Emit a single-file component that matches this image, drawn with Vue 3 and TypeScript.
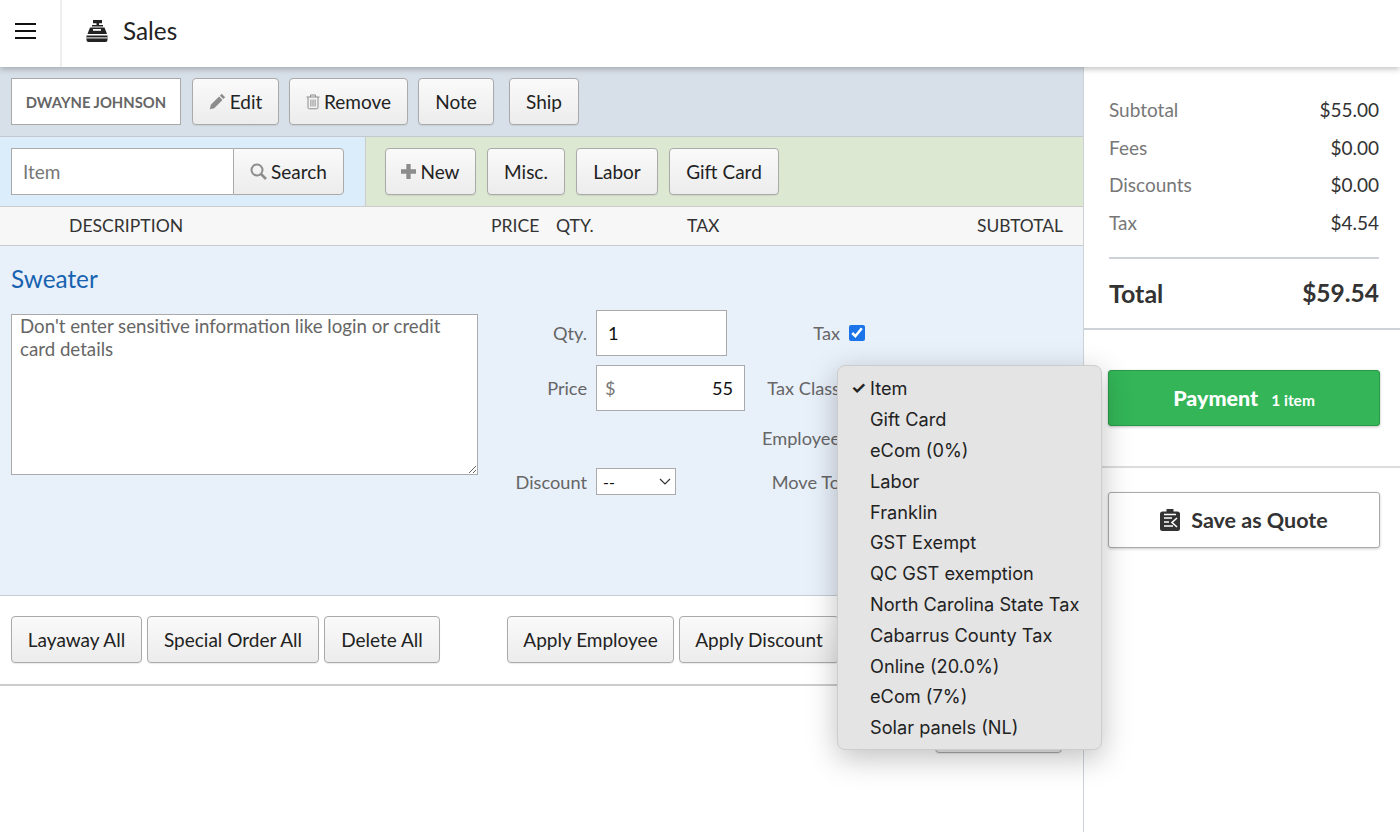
<script setup lang="ts">
const totals = [
  { label: 'Subtotal', value: '$55.00' },
  { label: 'Fees', value: '$0.00' },
  { label: 'Discounts', value: '$0.00' },
  { label: 'Tax', value: '$4.54' },
]
const taxClasses = ['Item', 'Gift Card', 'eCom (0%)', 'Labor', 'Franklin', 'GST Exempt', 'QC GST exemption', 'North Carolina State Tax', 'Cabarrus County Tax', 'Online (20.0%)', 'eCom (7%)', 'Solar panels (NL)']
</script>

<template>
  <div class="page">
    <header class="topbar">
      <div class="burger">
        <svg width="22" height="18" viewBox="0 0 22 18"><path d="M0 2h21M0 9h21M0 16h21" stroke="#111" stroke-width="2" fill="none" /></svg>
      </div>
      <div class="title">
        <svg width="22" height="22" viewBox="0 0 22 22" fill="#222">
          <path d="M7 0h9v3.200h-3V5h4v1.600H6V5h4.500V3.200H7z" />
          <path d="M4 7.500h14.500L21 14H1.500z" />
          <rect x="7" y="9" width="8" height="1.800" fill="#fff" />
          <path d="M0.500 15.500h21V20A2 2 0 0 1 19.500 22h-17A2 2 0 0 1 .5 20z" />
          <rect x="0.500" y="17.400" width="21" height="1" fill="#fff" />
        </svg>
        <span>Sales</span>
      </div>
    </header>

    <div class="body">
      <main class="main">
        <section class="customer">
          <div class="customer-name">DWAYNE JOHNSON</div>
          <button class="btn w-edit">
            <svg width="17" height="17" viewBox="0 0 16 16" fill="#8c8c8c"><path d="M12 .8l3.200 3.200-1.700 1.700-3.200-3.200zM9.500 3.300l3.200 3.200-7.800 7.800L.8 15.200l.9-4.100z" /></svg>
            Edit
          </button>
          <button class="btn w-remove">
            <svg width="14" height="17" viewBox="0 0 14 16" fill="none" stroke="#8c8c8c"><path d="M.5 3.500h13M4.500 3.500V1.500h5v2M2 3.500v10.500a1.300 1.300 0 0 0 1.300 1.300h7.400a1.300 1.300 0 0 0 1.300-1.300V3.500M4.900 6v7M7 6v7M9.100 6v7" /></svg>
            Remove
          </button>
          <button class="btn w-note">Note</button>
          <button class="btn w-ship">Ship</button>
        </section>

        <section class="tools">
          <div class="search">
            <div class="search-group">
              <input class="item-input" placeholder="Item" />
              <button class="search-btn">
                <svg width="17" height="17" viewBox="0 0 17 17" fill="none" stroke="#8c8c8c" stroke-width="2"><circle cx="7" cy="7" r="5.500" /><path d="M11 11l5 5" stroke-width="2.500" /></svg>
                Search
              </button>
            </div>
          </div>
          <div class="add">
            <button class="btn w-new">
              <svg width="15" height="15" viewBox="0 0 14 14" fill="#8c8c8c"><path d="M5 0h4v5h5v4H9v5H5V9H0V5h5z" /></svg>
              New
            </button>
            <button class="btn w-misc">Misc.</button>
            <button class="btn w-labor">Labor</button>
            <button class="btn w-gift">Gift Card</button>
          </div>
        </section>

        <div class="thead">
          <span class="th-desc">DESCRIPTION</span>
          <span class="th-price">PRICE</span>
          <span class="th-qty">QTY.</span>
          <span class="th-tax">TAX</span>
          <span class="th-sub">SUBTOTAL</span>
        </div>

        <section class="line">
          <a class="line-title">Sweater</a>
          <div class="line-body">
            <textarea class="note" placeholder="Don't enter sensitive information like login or credit card details"></textarea>
            <div class="fields">
              <label class="lab lab-qty">Qty.</label>
              <input class="box qty" value="1" />
              <label class="lab lab2 lab-tax">Tax</label>
              <input class="check" type="checkbox" checked />

              <label class="lab lab-price">Price</label>
              <div class="box price"><span class="dollar">$</span><span>55</span></div>
              <label class="lab lab2 lab-class">Tax Class</label>

              <label class="lab lab2 lab-emp">Employee</label>

              <label class="lab lab-disc">Discount</label>
              <div class="discount"><span>--</span>
                <svg width="12" height="7" viewBox="0 0 12 7" fill="none" stroke="#333" stroke-width="1.200"><path d="M1 1l5 5 5-5" /></svg>
              </div>
              <label class="lab lab2 lab-move">Move To</label>
            </div>
          </div>
        </section>

        <section class="actions">
          <div class="act-left">
            <button class="btn w-lay">Layaway All</button>
            <button class="btn w-spec">Special Order All</button>
            <button class="btn w-del">Delete All</button>
          </div>
          <div class="act-mid">
            <button class="btn w-emp">Apply Employee</button>
            <button class="btn w-disc">Apply Discount</button>
          </div>
        </section>
        <div class="under">
          <button class="btn w-hidden"></button>
        </div>
      </main>

      <aside class="side">
        <div class="totals">
          <div v-for="t in totals" :key="t.label" class="row">
            <span class="k">{{ t.label }}</span><span class="v">{{ t.value }}</span>
          </div>
          <div class="total"><span>Total</span><span class="total-v">$59.54</span></div>
        </div>
        <div class="pay-wrap">
          <button class="pay"><b>Payment</b><small>1 item</small></button>
        </div>
        <div class="quote-wrap">
          <button class="quote">
            <svg width="20" height="22" viewBox="0 0 20 22">
              <path fill="#333" d="M6.500 0h7v2.500h4A2.500 2.500 0 0 1 20 5v14.500a2.500 2.500 0 0 1-2.500 2.500h-15A2.500 2.500 0 0 1 0 19.500V5a2.500 2.500 0 0 1 2.500-2.500h4z" />
              <path fill="none" stroke="#fff" stroke-width="1.600" d="M4 5.500h12M4 9h8M4 13h5M4 17h9M17 9l-5 4.500 5 4.500" />
            </svg>
            Save as Quote
          </button>
        </div>
      </aside>
    </div>

    <ul class="menu">
      <li v-for="(c, i) in taxClasses" :key="c"><span class="tick">{{ i === 0 ? '✓' : '' }}</span>{{ c }}</li>
    </ul>
  </div>
</template>

<style scoped>
.page { position: relative; width: 1400px; height: 832px; overflow: hidden; background: #fff; font-family: Lato, "Liberation Sans", sans-serif; color: #222; font-size: 18px; }
.topbar { height: 67px; display: flex; position: relative; z-index: 2; background: #fff; box-shadow: 0 2px 6px rgba(0,0,0,.25); }
.burger { width: 45px; border-right: 2px solid #eee; display: flex; align-items: center; padding-left: 15px; }
.burger svg { margin-top: -5px; }
.title { display: flex; align-items: center; margin: -6px 0 0 24px; gap: 15px; font-size: 24.300px; color: #222; }
.body { display: flex; height: 765px; }
.main { width: 1083px; flex: none; }
.side { flex: 1; border-left: 1px solid #ccd2d8; }

.btn { box-sizing: border-box; height: 47px; padding: 0 0 1px; border: 1px solid #aaa; border-radius: 4px; background: linear-gradient(#fafafa, #ececec); color: #222; font: 19px Lato, sans-serif; display: inline-flex; align-items: center; justify-content: center; gap: 4px; box-shadow: 0 1px 1px rgba(0,0,0,.08); }

.customer { height: 70px; box-sizing: border-box; background: #d7dfe8; border-bottom: 1px solid #c3c9cf; display: flex; padding: 11px 11px 0; }
.customer-name { box-sizing: border-box; width: 170px; height: 47px; background: #fff; border: 1px solid #aaa; font-size: 14.800px; font-weight: 700; color: #666; display: flex; align-items: center; justify-content: center; }
.w-edit { width: 87px; margin-left: 11px; }
.w-remove { width: 119px; margin-left: 10px; }
.w-note { width: 76px; margin-left: 10px; }
.w-ship { width: 70px; margin-left: 15px; }

.tools { display: flex; height: 70px; box-sizing: border-box; border-bottom: 1px solid #ccc; }
.search { width: 365px; flex: none; box-sizing: border-box; background: #dbecfb; padding: 11px; }
.search-group { display: flex; height: 47px; width: 333px; }
.item-input { box-sizing: border-box; width: 222px; height: 47px; border: 1px solid #aaa; border-right: 0; padding: 0 11px; font: 19px Lato, sans-serif; outline: none; }
.item-input::placeholder { color: #777; }
.search-btn { flex: 1; box-sizing: border-box; border: 1px solid #aaa; border-radius: 0 4px 4px 0; background: linear-gradient(#fafafa, #ececec); font: 19px Lato, sans-serif; color: #222; display: flex; align-items: center; justify-content: center; gap: 4px; padding: 0; }
.add { flex: 1; background: #dde8d3; border-left: 1px solid #ccc; display: flex; padding: 11px 19px 0; }
.w-new { width: 91px; }
.w-misc { width: 78px; margin-left: 11px; }
.w-labor { width: 82px; margin-left: 11px; }
.w-gift { width: 110px; margin-left: 11px; }

.thead { height: 39px; box-sizing: border-box; padding-bottom: 1px; background: #f7f7f7; border-bottom: 1px solid #ccc; display: flex; align-items: center; font-size: 17.600px; color: #333; }
.th-desc { margin-left: 69px; width: 422px; }
.th-price { width: 65px; }
.th-qty { width: 131px; }
.th-tax { flex: 1; }
.th-sub { margin-right: 20px; font-size: 17.400px; }

.line { height: 350px; box-sizing: border-box; background: #e8f0fa; border-bottom: 1px solid #c6ccd2; padding: 18px 11px 0; }
.line-title { display: block; font-size: 24.300px; line-height: 30px; color: #1763b0; }
.line-body { display: flex; margin-top: 20px; }
.note { box-sizing: border-box; width: 467px; height: 161px; flex: none; border: 1px solid #aaa; border-radius: 0; padding: 0 30px 0 8px; font: 18.700px/23px Lato, sans-serif; outline: none; margin: 0; background: #fff; }
.note::placeholder { color: #666; }
.fields { display: grid; margin-top: -4px; grid-template-columns: 118px 149px 104px auto; grid-template-rows: 46px 46px 36px 33px; row-gap: 9px; align-items: center; flex: none; }
.lab { color: #666; text-align: right; padding-right: 9px; font-size: 18.200px; line-height: 24px; white-space: nowrap; }
.lab-qty { grid-area: 1 / 1; }
.qty { grid-area: 1 / 2; width: 131px; }
.lab-tax { grid-area: 1 / 3; }
.check { grid-area: 1 / 4; width: 16px; height: 16px; margin: 0; accent-color: #1a73e8; }
.lab-price { grid-area: 2 / 1; }
.price { grid-area: 2 / 2; width: 149px; display: flex; justify-content: space-between; align-items: center; }
.lab-class { grid-area: 2 / 3; }
.lab-emp { grid-area: 3 / 3; }
.lab-disc { grid-area: 4 / 1; }
.discount { grid-area: 4 / 2; width: 80px; height: 27px; box-sizing: border-box; border: 1px solid #aaa; background: #fff; display: flex; align-items: center; justify-content: space-between; padding: 0 4px 0 6px; font-size: 16px; color: #111; }
.lab-move { grid-area: 4 / 3; }
.box { box-sizing: border-box; height: 46px; border: 1px solid #aaa; background: #fff; font: 18.200px Lato, sans-serif; padding: 0 11px; color: #111; outline: none; }
.dollar { color: #777; margin-left: -3px; }

.actions { height: 90px; box-sizing: border-box; border-bottom: 2px solid #ccc; display: flex; padding: 20px 0 0 11px; }
.act-left { display: flex; gap: 5px; }
.act-mid { display: flex; gap: 5px; margin-left: 67px; }
.w-lay { width: 131px; }
.w-spec { width: 172px; }
.w-del { width: 116px; }
.w-emp { width: 167px; }
.w-disc { width: 160px; }
.under { display: flex; justify-content: flex-end; padding: 20px 21px 0 0; }
.w-hidden { width: 127px; }

.totals { padding: 24px 21px 0 25px; height: 263px; box-sizing: border-box; border-bottom: 2px solid #ccd2d8; }
.row { display: flex; justify-content: space-between; height: 37.500px; align-items: center; font-size: 19px; }
.k { color: #777; }
.v { color: #333; }
.total { margin-top: 16px; border-top: 2px solid #ccd2d8; padding-top: 19px; display: flex; justify-content: space-between; font-size: 25px; font-weight: 700; color: #333; }
.total-v { font-size: 24.500px; }
.pay-wrap { height: 138px; box-sizing: border-box; padding: 40px 20px 0 24px; border-bottom: 2px solid #ddd; }
.pay { width: 100%; height: 56px; border: 1px solid #2a9a48; border-radius: 3px; background: #33b558; color: #fff; display: flex; align-items: center; justify-content: center; gap: 13px; font: 700 21.500px Lato, sans-serif; box-shadow: 0 1px 3px rgba(0,0,0,.25); }
.pay small { font-size: 15.500px; font-weight: 700; margin-top: 3px; }
.quote-wrap { padding: 24px 20px 0 24px; }
.quote { width: 100%; height: 56px; border: 1px solid #aaa; border-radius: 3px; background: #fff; color: #333; display: flex; align-items: center; justify-content: center; gap: 11px; font: 700 21.500px Lato, sans-serif; box-shadow: 0 1px 3px rgba(0,0,0,.2); }

.menu { position: absolute; left: 837px; top: 365px; width: 265px; height: 385px; box-sizing: border-box; margin: 0; padding: 7px 0; list-style: none; background: #e4e4e4; border: 1px solid #cdcdcd; border-radius: 8px; box-shadow: 0 8px 30px rgba(0,0,0,.25); font: 18.200px Inter, "Liberation Sans", sans-serif; color: #222; z-index: 5; }
.menu li { height: 30.800px; display: flex; align-items: center; white-space: nowrap; }
.tick { width: 32px; padding-left: 13px; box-sizing: border-box; font-size: 17px; font-weight: 700; flex: none; }
</style>
